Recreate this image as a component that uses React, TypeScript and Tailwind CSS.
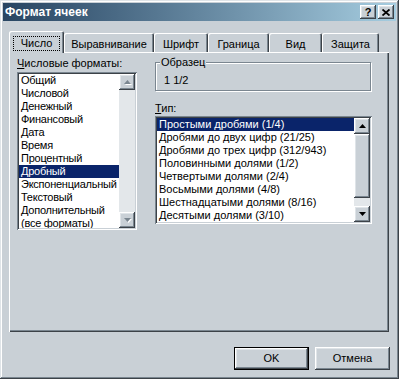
import React from "react";

const raised =
  "shadow-[inset_-1px_-1px_#3c4248,inset_1px_1px_#ffffff,inset_-2px_-2px_#7a8690,inset_2px_2px_#dfe4e8]";
const sunken =
  "shadow-[inset_1px_1px_#7a8690,inset_-1px_-1px_#ffffff,inset_2px_2px_#3c4248,inset_-2px_-2px_#c9d0d6]";

const tabs = [
  { label: "Число", w: "w-[55px]" },
  { label: "Выравнивание", w: "w-[90px]" },
  { label: "Шрифт", w: "w-[54px]" },
  { label: "Граница", w: "w-[61px]" },
  { label: "Вид", w: "w-[53px]" },
  { label: "Защита", w: "w-[57px]" },
];

const formats = [
  "Общий",
  "Числовой",
  "Денежный",
  "Финансовый",
  "Дата",
  "Время",
  "Процентный",
  "Дробный",
  "Экспоненциальный",
  "Текстовый",
  "Дополнительный",
  "(все форматы)",
];

const types = [
  "Простыми дробями (1/4)",
  "Дробями до двух цифр (21/25)",
  "Дробями до трех цифр (312/943)",
  "Половинными долями (1/2)",
  "Четвертыми долями (2/4)",
  "Восьмыми долями (4/8)",
  "Шестнадцатыми долями (8/16)",
  "Десятыми долями (3/10)",
];

const Arrow = ({ up, disabled }: { up?: boolean; disabled?: boolean }) => (
  <svg width="7" height="5" viewBox="0 0 7 5" className="overflow-visible">
    {disabled && (
      <polygon
        points={up ? "4.5,1 8,5 1,5" : "1,1 8,1 4.5,5"}
        fill="#ffffff"
      />
    )}
    <polygon
      points={up ? "3.5,0 7,4 0,4" : "0,0 7,0 3.5,4"}
      fill={disabled ? "#7a8690" : "#000000"}
    />
  </svg>
);

const ScrollButton = ({ up, disabled }: { up?: boolean; disabled?: boolean }) => (
  <div className={`h-[16px] w-[16px] bg-[#c9d0d6] flex items-center justify-center ${raised}`}>
    <Arrow up={up} disabled={disabled} />
  </div>
);

const ListBox = ({
  items,
  selected,
  h,
  thumb,
  tight,
}: {
  items: string[];
  selected: number;
  h: string;
  thumb?: boolean;
  tight?: boolean;
}) => (
  <div className={`${h} bg-white p-[2px] flex ${sunken}`}>
    <div className={`flex-1 overflow-hidden ${tight ? "tracking-[-0.25px]" : ""}`}>
      {items.map((it, i) => (
        <div
          key={it}
          className={`h-[13px] leading-[13px] pl-[2px] whitespace-nowrap ${
            i === selected ? "bg-[#0a246a] text-white" : "text-black"
          }`}
        >
          {it}
        </div>
      ))}
    </div>
    <div className="w-[16px] flex flex-col bg-[#e3e7ea]">
      <ScrollButton up disabled={!thumb} />
      {thumb && <div className={`h-[64px] bg-[#c9d0d6] ${raised}`} />}
      <div className="flex-1" />
      <ScrollButton disabled={!thumb} />
    </div>
  </div>
);

export default function App() {
  return (
    <div
      className={`w-[399px] h-[379px] bg-[#c9d0d6] p-[3px] flex flex-col text-[11px] text-black font-[Liberation_Sans,Arial,sans-serif] shadow-[inset_-1px_-1px_#3c4248,inset_1px_1px_#dfe4e8,inset_-2px_-2px_#7a8690,inset_2px_2px_#ffffff]`}
    >
      {/* title bar */}
      <div className="h-[18px] flex items-center justify-between bg-gradient-to-r from-[#284562] to-[#a6cde0] pl-[2px] pr-[2px]">
        <span className="text-white font-bold text-[12px] leading-[18px]">Формат ячеек</span>
        <div className="flex gap-[2px]">
          <div className={`w-[16px] h-[14px] bg-[#c9d0d6] flex items-center justify-center font-bold text-[11px] leading-none ${raised}`}>
            ?
          </div>
          <div className={`w-[16px] h-[14px] bg-[#c9d0d6] flex items-center justify-center ${raised}`}>
            <svg width="8" height="7" viewBox="0 0 8 7">
              <path d="M0.5 0.5 L7.5 6.5 M7.5 0.5 L0.5 6.5" stroke="#000" strokeWidth="1.8" />
            </svg>
          </div>
        </div>
      </div>

      {/* tabs */}
      <div className="mt-[10px] ml-[6px] h-[21px] flex items-end">
        {tabs.map((t, i) =>
          i === 0 ? (
            <div
              key={t.label}
              className={`${t.w} h-[22px] -mb-[1px] relative z-10 bg-[#c9d0d6] flex items-center justify-center pt-[2px] rounded-t-[2px] shadow-[inset_1px_1px_#ffffff,inset_-1px_0_#3c4248,inset_-2px_0_#7a8690]`}
            >
              <span className="border border-dotted border-black h-[15px] leading-[13px] px-[7px]">{t.label}</span>
            </div>
          ) : (
            <div
              key={t.label}
              className={`${t.w} h-[19px] bg-[#c9d0d6] flex items-center justify-center pt-[3px] rounded-t-[2px] shadow-[inset_1px_1px_#ffffff,inset_-1px_0_#3c4248,inset_-2px_0_#7a8690]`}
            >
              {t.label}
            </div>
          )
        )}
      </div>

      {/* panel */}
      <div className="ml-[6px] w-[380px] h-[280px] flex pl-[8px] pt-[5px] gap-[18px] shadow-[inset_1px_1px_#ffffff,inset_-1px_-1px_#3c4248,inset_-2px_-2px_#7a8690]">
        <div className="w-[120px] flex flex-col">
          <div className="h-[13px] leading-[13px]">
            <span className="underline">Ч</span>исловые форматы:
          </div>
          <div className="mt-[2px]">
            <ListBox items={formats} selected={7} h="h-[158px]" tight />
          </div>
        </div>

        <div className="w-[217px] flex flex-col">
          <div className="mt-[5px] relative w-[216px] h-[29px] border border-[#7a8690] shadow-[inset_1px_1px_#ffffff,1px_1px_#ffffff] pl-[8px] pt-[11px] leading-[13px]">
            <span className="absolute -top-[7px] left-[4px] bg-[#c9d0d6] px-[1px] leading-[13px]">Образец</span>
            1 1/2
          </div>
          <div className="mt-[11px] h-[13px] leading-[13px]">
            <span className="underline">Т</span>ип:
          </div>
          <div className="mt-[1px]">
            <ListBox items={types} selected={0} h="h-[108px]" thumb />
          </div>
        </div>
      </div>

      {/* buttons */}
      <div className="mt-[15px] mr-[6px] flex justify-end gap-[6px]">
        <div className="w-[75px] h-[23px] border border-black">
          <div className={`w-full h-full bg-[#c9d0d6] flex items-center justify-center ${raised}`}>OK</div>
        </div>
        <div className={`w-[75px] h-[23px] bg-[#c9d0d6] flex items-center justify-center ${raised}`}>Отмена</div>
      </div>
    </div>
  );
}
